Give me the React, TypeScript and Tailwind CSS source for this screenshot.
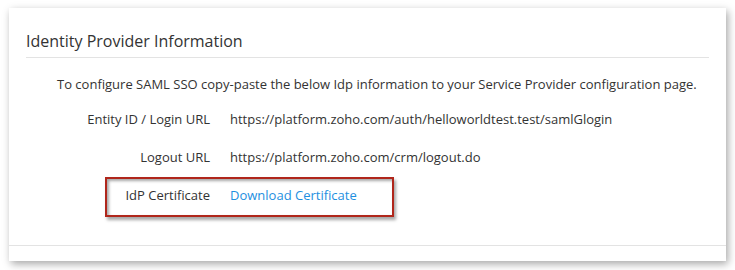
import React from "react";

export default function App() {
  const font = { fontFamily: '"Open Sans", "Noto Sans", sans-serif' };
  return (
    <div className="w-[735px] h-[270px] bg-white pt-[8px] pl-[9px]" style={font}>
      <div className="w-[717px] h-[253px] bg-white flex flex-col shadow-[2px_3px_8px_rgba(0,0,0,0.35)]">
        <div className="mx-[17px] mt-[22px] pb-[5px] border-b border-[#e3e3e3] text-[16px] leading-[22px] text-[#333]">
          Identity Provider Information
        </div>
        <div className="pl-[48px] mt-[16px] text-[13px] leading-[20px] text-[#333]">
          To configure SAML SSO copy-paste the below Idp information to your Service Provider configuration page.
        </div>
        <div className="mt-[15px] flex flex-col gap-[18px] text-[13px] leading-[20px] text-[#333]">
          <div className="flex">
            <div className="w-[201px] text-right">Entity ID / Login URL</div>
            <div className="pl-[20px]">https://platform.zoho.com/auth/helloworldtest.test/samlGlogin</div>
          </div>
          <div className="flex">
            <div className="w-[201px] text-right">Logout URL</div>
            <div className="pl-[20px]">https://platform.zoho.com/crm/logout.do</div>
          </div>
          <div className="flex">
            <div className="relative w-[201px] text-right">
              <div className="absolute left-[96px] top-[-8px] w-[289px] h-[40px] border-2 border-[#b0261b] shadow-[2px_3px_3px_rgba(0,0,0,0.35),inset_2px_2px_3px_rgba(0,0,0,0.35)]" />
              IdP Certificate
            </div>
            <div className="pl-[20px] text-[#1e8fdf]">Download Certificate</div>
          </div>
        </div>
        <div className="mt-auto mb-[15px] border-b border-[#e3e3e3]" />
      </div>
    </div>
  );
}
